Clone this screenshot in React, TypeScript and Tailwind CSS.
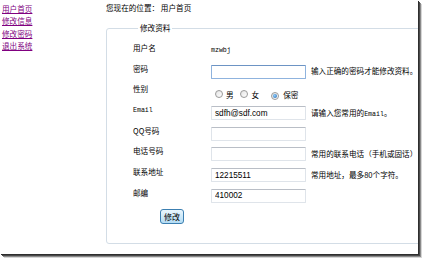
import React from "react";

function Radio({ checked }: { checked?: boolean }) {
  return (
    <span className="inline-flex w-[8px] h-[8px] rounded-full border border-[#9a9a9a] bg-gradient-to-br from-[#e4e4e4] to-[#ffffff] items-center justify-center shrink-0">
      {checked && <span className="w-[4px] h-[4px] rounded-full bg-[radial-gradient(circle_at_40%_40%,#8fd0ff,#1f5fa8)]" />}
    </span>
  );
}

function TextBox({ value, focus }: { value?: string; focus?: boolean }) {
  return (
    <input
      readOnly
      value={value ?? ""}
      className={
        "w-[95px] h-[14px] shrink-0 rounded-[1px] border px-[3px] text-[8.2px] text-black font-['Liberation_Sans',Arial,sans-serif] outline-none bg-white " +
        (focus
          ? "border-[#8fb3de] border-t-[#6d94c4]"
          : "border-[#dfe4ea] border-t-[#b9bec6]")
      }
    />
  );
}

function Row({
  label,
  children,
}: {
  label: React.ReactNode;
  children?: React.ReactNode;
}) {
  return (
    <div className="flex items-center h-[20.7px]">
      <div className="w-[78px] shrink-0 mb-[6px] leading-[10px]">{label}</div>
      <div className="flex items-baseline whitespace-nowrap">{children}</div>
    </div>
  );
}

const mono = "font-['Liberation_Mono',monospace] text-[6.6px]";

export default function App() {
  return (
    <div className="w-[423px] h-[259px] bg-white font-['Noto_Sans_CJK_SC','Noto_Sans',sans-serif] text-[7.6px] text-black">
      <div className="w-[418px] h-[254px] overflow-hidden bg-white flex shadow-[1px_1px_0_#2e2e2e,2px_2px_0_#4a4a4a,3px_3px_0_#8a8a8a,4px_4px_0_#d6d6d6]">
        <nav className="w-[106px] shrink-0 pl-[2px] pt-[3px] flex flex-col items-start leading-[12.3px]">
          <a href="#" className="text-[#800080] underline">用户首页</a>
          <a href="#" className="text-[#800080] underline">修改信息</a>
          <a href="#" className="text-[#800080] underline">修改密码</a>
          <a href="#" className="text-[#800080] underline">退出系统</a>
        </nav>
        <main className="flex flex-col shrink-0 w-[340px]">
          <div className="pt-[3px] leading-[10px] whitespace-nowrap">您现在的位置： 用户首页</div>
          <fieldset className="mt-[10px] w-[340px] h-[221px] border border-[#d3dde6] rounded-[3px] pl-[26px] pt-[7.6px]">
            <legend className="ml-[5px] px-[2px] leading-[10px]">修改资料</legend>
            <Row label="用户名">
              <span className={mono}>mzwbj</span>
            </Row>
            <Row label="密码">
              <TextBox focus />
              <span className="ml-[5px]">输入正确的密码才能修改资料。</span>
            </Row>
            <Row label="性别">
              <div className="flex items-center mt-[4px]">
                <span className="ml-[4px]"><Radio /></span>
                <span className="ml-[3px]">男</span>
                <span className="ml-[6px]"><Radio /></span>
                <span className="ml-[4px]">女</span>
                <span className="ml-[12px]"><Radio checked /></span>
                <span className="ml-[4px]">保密</span>
              </div>
            </Row>
            <Row label={<span className={mono}>Email</span>}>
              <TextBox value="sdfh@sdf.com" />
              <span className="ml-[5px]">
                请输入您常用的<span className={mono}>Email</span>。
              </span>
            </Row>
            <Row label="QQ号码">
              <TextBox />
            </Row>
            <Row label="电话号码">
              <TextBox />
              <span className="ml-[5px]">常用的联系电话（手机或固话）</span>
            </Row>
            <Row label="联系地址">
              <TextBox value="12215511" />
              <span className="ml-[5px]">常用地址，最多80个字符。</span>
            </Row>
            <Row label="邮编">
              <TextBox value="410002" />
            </Row>
            <div className="mt-[3px] pl-[27px]">
              <button className="w-[24px] h-[15px] rounded-[3px] border border-[#3c7fb1] bg-gradient-to-b from-[#eaf6fd] to-[#b3dcf4] text-[8px] leading-[12px] text-black flex items-center justify-center">
                修改
              </button>
            </div>
          </fieldset>
        </main>
      </div>
    </div>
  );
}
